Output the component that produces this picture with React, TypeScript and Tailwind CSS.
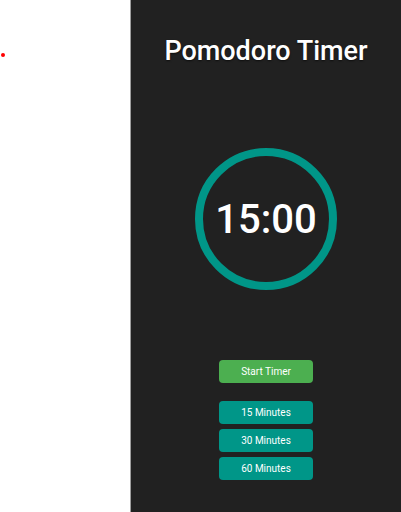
import { useState } from "react"

// 타이머 프리셋 (분)
const presets = [15, 30, 60]

function App() {
    const [minutes, setMinutes] = useState(15)

    const display = `${String(minutes).padStart(2, "0")}:00`

    return (
    <div className="flex w-[401px] h-[512px] overflow-hidden" style={{ fontFamily: "Roboto, 'Noto Sans', sans-serif" }}>
        {/* left blank area */}
        <div className="w-[131px] h-full bg-white border-r border-[#9e9e9e] pt-[53px]">
            <div className="w-[4px] h-[4px] ml-[1px] rounded-full bg-[#ff0000]"></div>
        </div>

        {/* timer panel */}
        <div className="flex-1 h-full bg-[#212121] flex flex-col items-center text-white">
            <h1 className="mt-[34px] text-[27px] leading-[35px] font-medium [text-shadow:0_1px_2px_rgba(0,0,0,0.6)]">Pomodoro Timer</h1>

            <div className="mt-[79px] w-[142px] h-[142px] rounded-full border-[8px] border-[#009688] flex items-center justify-center">
                <span className="text-[40px] leading-none font-medium mt-[2px]">{display}</span>
            </div>

            <button className="mt-[70px] w-[94px] h-[23px] rounded bg-[#4caf50] text-[10px] text-white">
                Start Timer
            </button>

            <div className="mt-[18px] flex flex-col gap-[5px]">
                {presets.map(m => (
                    <button key={m}
                        onClick={() => setMinutes(m)}
                        className="w-[94px] h-[23px] rounded bg-[#009688] text-[10px] text-white">
                        {m} Minutes
                    </button>
                ))}
            </div>
        </div>
    </div>
    )
}

export default App
